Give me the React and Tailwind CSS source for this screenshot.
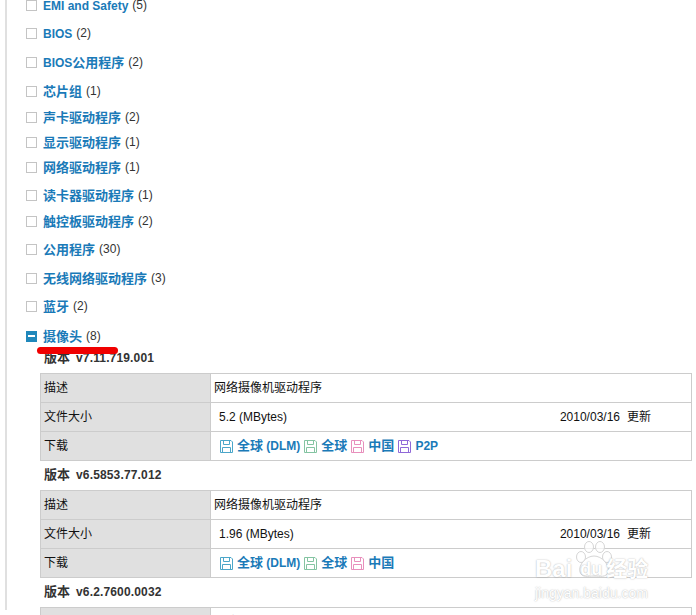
const FONT = "font-['Liberation_Sans','Noto_Sans_CJK_SC',sans-serif]";

const rows = [
  { name: "EMI and Safety", n: 5, cls: "-mt-[5px]" },
  { name: "BIOS", n: 2, cls: "mt-[8px]" },
  { name: "BIOS公用程序", n: 2, cls: "mt-[9px]" },
  { name: "芯片组", n: 1, cls: "mt-[9px]" },
  { name: "声卡驱动程序", n: 2, cls: "mt-[6px]" },
  { name: "显示驱动程序", n: 1, cls: "mt-[5px]" },
  { name: "网络驱动程序", n: 1, cls: "mt-[5px]" },
  { name: "读卡器驱动程序", n: 1, cls: "mt-[8px]" },
  { name: "触控板驱动程序", n: 2, cls: "mt-[6px]" },
  { name: "公用程序", n: 30, cls: "mt-[8px]" },
  { name: "无线网络驱动程序", n: 3, cls: "mt-[9px]" },
  { name: "蓝牙", n: 2, cls: "mt-[8px]" },
];

// Latin runs are set at 12px and CJK runs at 13px, as in the reference.
function Mixed({ text }) {
  const parts = text.match(/[\u4e00-\u9fff]+|[^\u4e00-\u9fff]+/g) || [];
  return parts.map((p, i) =>
    /[\u4e00-\u9fff]/.test(p) ? (
      <span key={i} className="text-[13px]">{p}</span>
    ) : (
      <span key={i} className="text-[12px]">{p}</span>
    )
  );
}

function Row({ name, n, cls, open }) {
  return (
    <div className={`flex h-[20px] items-center ${cls}`}>
      {open ? (
        <span className="flex h-[11px] w-[11px] shrink-0 items-center justify-center bg-[#2088bb]">
          <span className="h-[2px] w-[7px] bg-white" />
        </span>
      ) : (
        <span className="h-[11px] w-[11px] shrink-0 border border-[#c4c4c4] bg-white" />
      )}
      <span className="ml-[6px] font-bold text-[#1a7ab8]"><Mixed text={name} /></span>
      <span className="ml-[4px] text-[12px] text-[#333]">({n})</span>
    </div>
  );
}

function Disk({ color }) {
  return (
    <svg width="13" height="13" viewBox="0 0 13 13" fill="none" stroke={color} strokeWidth="1" className="shrink-0">
      <path d="M0.5 0.5H11L12.5 2V12.5H0.5Z" />
      <path d="M3.5 0.5V4.5H9.5V0.5" />
      <path d="M2.5 12.5V7.5H10.5V12.5" />
    </svg>
  );
}

function Dl({ color, label, cls }) {
  return (
    <span className={`flex items-center gap-[4px] ${cls || ""}`}>
      <Disk color={color} />
      <span className="font-bold text-[#1a7ab8]"><Mixed text={label} /></span>
    </span>
  );
}

function Version({ v, cls, size, date, p2p, links = true }) {
  return (
    <div className={cls}>
      <div className="flex h-[20px] items-center pl-[18px] font-bold text-[#333]">
        <span className="text-[13px]">版本</span>
        <span className="ml-[6px] text-[12px] tracking-[0.15px]">{v}</span>
      </div>
      <table className="ml-[14px] mt-[5px] w-[652px] table-fixed border-collapse text-[12px] text-[#111]">
        <tbody>
          <tr className="h-[29px]">
            <td className="w-[170px] border border-[#cccccc] bg-[#e0e0e0] pl-[3px]">描述</td>
            <td className="border border-[#cccccc] pl-[3px]">网络摄像机驱动程序</td>
          </tr>
          <tr className="h-[29px]">
            <td className="border border-[#cccccc] bg-[#e0e0e0] pl-[3px]">文件大小</td>
            <td className="border border-[#cccccc] pl-[8px]">
              <div className="flex justify-between pr-[40px]">
                <span>{size}</span>
                <span>{date}<span className="ml-[7px]">更新</span></span>
              </div>
            </td>
          </tr>
          <tr className="h-[29px]">
            <td className="border border-[#cccccc] bg-[#e0e0e0] pl-[3px]">下载</td>
            <td className="border border-[#cccccc] pl-[9px]">
              {links && (
                <div className="flex items-center">
                  <Dl color="#4ba6c9" label="全球 (DLM)" />
                  <Dl color="#84c4a2" label="全球" cls="ml-[4px]" />
                  <Dl color="#e88fbc" label="中国" cls="ml-[4px]" />
                  {p2p && <Dl color="#9069d8" label="P2P" cls="ml-[4px]" />}
                </div>
              )}
            </td>
          </tr>
        </tbody>
      </table>
    </div>
  );
}

export default function App() {
  return (
    <div className={`relative h-[615px] w-[696px] overflow-hidden bg-white ${FONT}`}>
      <div className="ml-[5px] h-full border-l-2 border-[#e0e0e0] pl-[19px]">
        {rows.map((r) => (
          <Row key={r.name} {...r} />
        ))}
        <Row name="摄像头" n={8} cls="mt-[10px]" open />
        <Version v="v7.11.719.001" size="5.2 (MBytes)" date="2010/03/16" p2p cls="mt-[2px]" />
        <Version v="v6.5853.77.012" size="1.96 (MBytes)" date="2010/03/16" cls="mt-[4px]" />
        <Version v="v6.2.7600.0032" size="" date="" links={false} cls="mt-[4px]" />
      </div>

      <div className="absolute left-[37px] top-[347px] h-[7px] w-[81px] rounded-full bg-[#f00000]" />

      <div className="absolute left-[535px] top-[541px] w-[125px] text-white [text-shadow:0_0_1.5px_rgba(0,0,0,0.35)]">
        <svg width="40" height="38" viewBox="0 0 40 38" fill="#ffffff" fillOpacity="0.7" stroke="#d6d6d6" className="absolute left-[39px] top-0">
          <ellipse cx="7" cy="16" rx="4.5" ry="5.5" />
          <ellipse cx="15" cy="6" rx="4.5" ry="5.5" />
          <ellipse cx="26" cy="6" rx="4.5" ry="5.5" />
          <ellipse cx="33" cy="16" rx="4.5" ry="5.5" />
          <path d="M20 15C12 15 4 24 6 31C8 37 14 35 20 35C26 35 32 37 34 31C36 24 28 15 20 15Z" />
        </svg>
        <div className="relative flex items-center pt-[17px] font-bold leading-[22px]">
          <span className="text-[24px]">Bai</span>
          <span className="ml-[8px] text-[18px]">du</span>
          <span className="ml-[4px] text-[21px]">经验</span>
        </div>
        <div className="mt-[6px] text-[14px] leading-[14px]">jingyan.baidu.com</div>
      </div>
    </div>
  );
}
